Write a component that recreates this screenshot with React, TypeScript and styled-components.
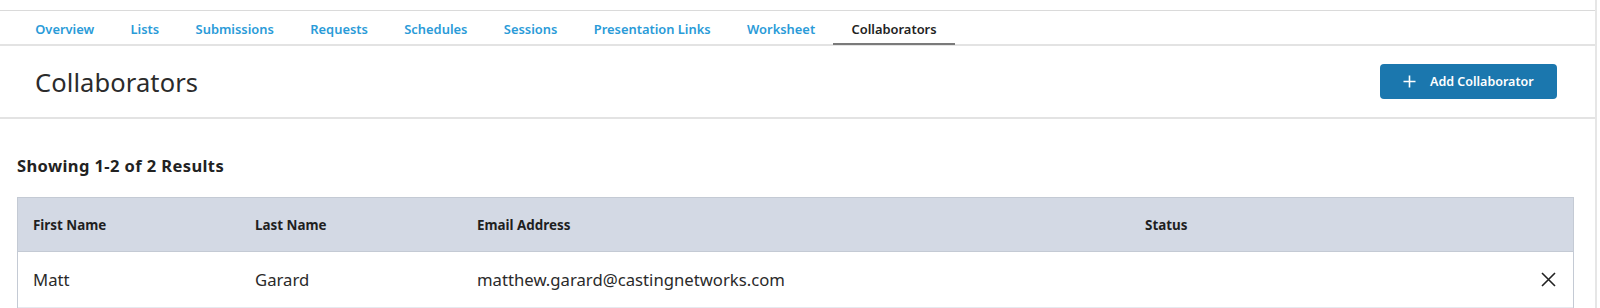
import React from "react";
import styled, { createGlobalStyle } from "styled-components";

const GlobalStyle = createGlobalStyle`
  html, body { margin: 0; padding: 0; background: #ffffff; }
  body { font-family: "Noto Sans", "Open Sans", Arial, sans-serif; color: #262626; }
  * { box-sizing: border-box; }
`;

const Page = styled.div`
  width: 1597px;
  min-height: 308px;
  border-right: 2px solid #e6e6e6;
  padding-top: 10px;
`;

const TabBar = styled.nav`
  display: flex;
  align-items: stretch;
  height: 36px;
  padding-left: 17px;
  border-top: 1px solid #dadada;
  border-bottom: 2px solid #e3e3e3;
`;

const Tab = styled.a<{ $active?: boolean }>`
  display: flex;
  align-items: center;
  padding: 3px 18.2px 0;
  margin-bottom: -1px;
  font-size: 12.9px;
  font-weight: 600;
  text-decoration: none;
  cursor: pointer;
  color: ${(p) => (p.$active ? "#222222" : "#2a9bd8")};
  border-bottom: 2px solid ${(p) => (p.$active ? "#7a7a7a" : "transparent")};
`;

const Header = styled.header`
  display: flex;
  align-items: center;
  justify-content: space-between;
  height: 73px;
  padding: 0 38px 0 35px;
  border-bottom: 2px solid #e3e3e3;
`;

const Title = styled.h1`
  margin: 0;
  font-size: 25.5px;
  font-weight: 400;
  color: #2b2b2b;
  letter-spacing: 0.1px;
`;

const PrimaryButton = styled.button`
  display: flex;
  align-items: center;
  gap: 14px;
  width: 177px;
  height: 35px;
  padding: 0 0 0 23px;
  border: none;
  border-radius: 4px;
  background: #1b77ae;
  color: #ffffff;
  font-family: inherit;
  font-size: 12.5px;
  font-weight: 600;
  cursor: pointer;
`;

const Content = styled.main`
  padding: 0 21px 0 17px;
`;

const ResultCount = styled.div`
  padding-top: 35px;
  height: 78px;
  font-size: 16.5px;
  font-weight: 700;
  color: #222222;
  letter-spacing: 0.4px;
`;

const Table = styled.div`
  border: 1px solid #c4cad4;
  border-bottom: none;
`;

const Row = styled.div<{ $head?: boolean }>`
  display: grid;
  grid-template-columns: 222px 222px 668px 1fr 40px;
  align-items: center;
  height: ${(p) => (p.$head ? "54px" : "56px")};
  background: ${(p) => (p.$head ? "#d3d9e4" : "#ffffff")};
  border-bottom: 1px solid ${(p) => (p.$head ? "#c4cad4" : "#e6e9ef")};
`;

const HeadCell = styled.div`
  padding-left: 15px;
  font-size: 13.4px;
  font-weight: 700;
  color: #1f1f1f;
`;

const Cell = styled.div`
  padding-left: 15px;
  font-size: 16.7px;
  font-weight: 400;
  color: #2a2a2a;
`;

const ActionCell = styled.div`
  display: flex;
  justify-content: flex-end;
  align-items: center;
  padding-right: 17px;
`;

const IconButton = styled.button`
  display: flex;
  padding: 0;
  border: none;
  background: none;
  cursor: pointer;
`;

const PlusIcon = () => (
  <svg width="13" height="13" viewBox="0 0 13 13" fill="none">
    <path d="M6.5 0.5v12M0.5 6.5h12" stroke="#ffffff" strokeWidth="1.6" />
  </svg>
);

const CloseIcon = () => (
  <svg width="15" height="15" viewBox="0 0 15 15" fill="none">
    <path d="M1 1l13 13M14 1L1 14" stroke="#222222" strokeWidth="1.6" />
  </svg>
);

const tabs = [
  "Overview",
  "Lists",
  "Submissions",
  "Requests",
  "Schedules",
  "Sessions",
  "Presentation Links",
  "Worksheet",
  "Collaborators",
];

const collaborators = [
  { first: "Matt", last: "Garard", email: "matthew.garard@castingnetworks.com", status: "" },
];

export default function App() {
  return (
    <>
      <GlobalStyle />
      <Page>
        <TabBar>
          {tabs.map((t) => (
            <Tab key={t} $active={t === "Collaborators"}>
              {t}
            </Tab>
          ))}
        </TabBar>
        <Header>
          <Title>Collaborators</Title>
          <PrimaryButton>
            <PlusIcon />
            Add Collaborator
          </PrimaryButton>
        </Header>
        <Content>
          <ResultCount>Showing 1-2 of 2 Results</ResultCount>
          <Table>
            <Row $head>
              <HeadCell>First Name</HeadCell>
              <HeadCell>Last Name</HeadCell>
              <HeadCell>Email Address</HeadCell>
              <HeadCell>Status</HeadCell>
              <HeadCell />
            </Row>
            {collaborators.map((c) => (
              <Row key={c.email}>
                <Cell>{c.first}</Cell>
                <Cell>{c.last}</Cell>
                <Cell>{c.email}</Cell>
                <Cell>{c.status}</Cell>
                <ActionCell>
                  <IconButton aria-label="Remove">
                    <CloseIcon />
                  </IconButton>
                </ActionCell>
              </Row>
            ))}
          </Table>
        </Content>
      </Page>
    </>
  );
}
